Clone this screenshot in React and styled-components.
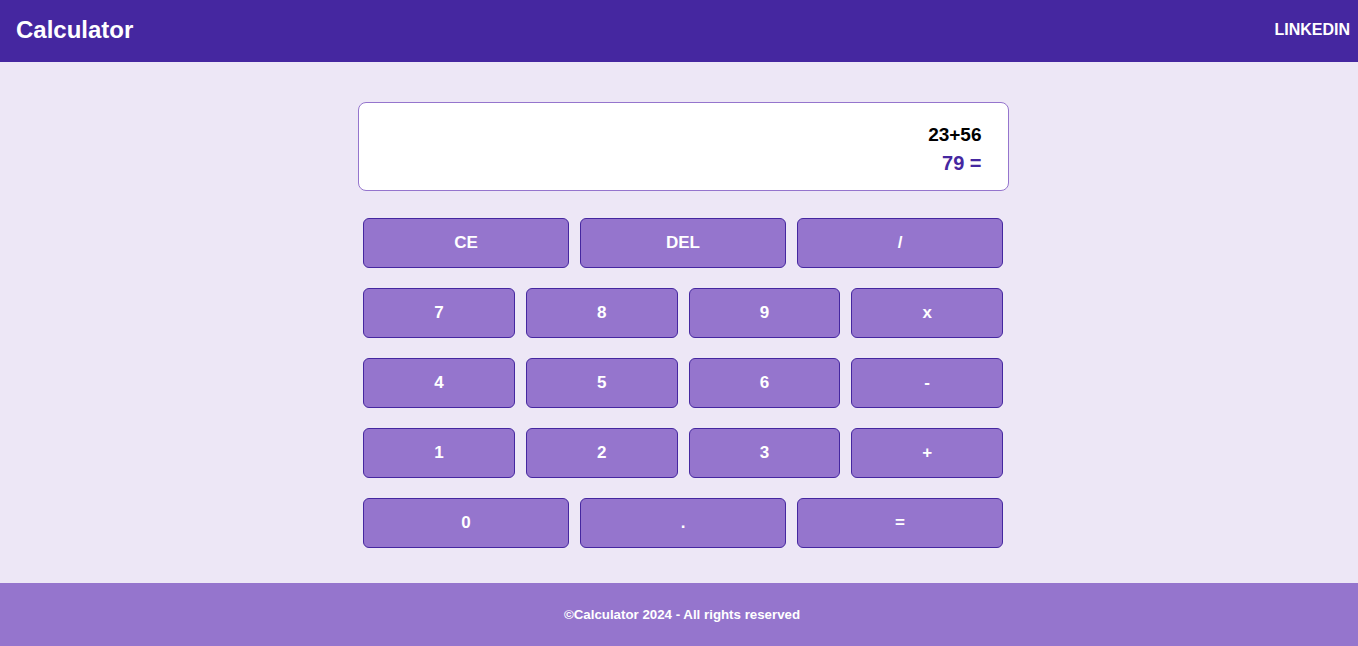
import React from "react";
import styled, { createGlobalStyle } from "styled-components";

const Global = createGlobalStyle`
  html, body { margin: 0; padding: 0; }
  body {
    font-family: "Liberation Sans", Arial, sans-serif;
    background: #ede7f6;
  }
`;

const Page = styled.div`
  min-height: 646px;
  display: flex;
  flex-direction: column;
`;

const Header = styled.header`
  height: 62px;
  background: #4527a0;
  display: flex;
  align-items: center;
  justify-content: space-between;
  padding: 0 8px 2px 16px;
  box-sizing: border-box;
`;

const Brand = styled.h1`
  margin: 0;
  color: #fff;
  font-size: 24px;
  font-weight: 700;
`;

const NavLink = styled.a`
  color: #fff;
  font-size: 16px;
  font-weight: 700;
  text-decoration: none;
`;

const Main = styled.main`
  flex: 1;
  display: flex;
  flex-direction: column;
  align-items: center;
  padding: 40px 0 35px 8px;
`;

const Display = styled.div`
  width: 651px;
  height: 89px;
  box-sizing: border-box;
  background: #fff;
  border: 1px solid #9575cd;
  border-radius: 8px;
  display: flex;
  flex-direction: column;
  align-items: flex-end;
  justify-content: flex-start;
  padding: 21px 26px 0;
  gap: 6px;
`;

const Expr = styled.div`
  font-size: 19px;
  line-height: 22px;
  font-weight: 700;
  color: #000;
`;

const Result = styled.div`
  font-size: 20px;
  line-height: 23px;
  font-weight: 700;
  color: #4527a0;
`;

const Keypad = styled.div`
  width: 640px;
  margin-top: 27px;
  display: flex;
  flex-direction: column;
  gap: 20px;
`;

const Row = styled.div`
  display: grid;
  grid-template-columns: repeat(${(p) => p.$cols}, 1fr);
  gap: 11px;
`;

const Key = styled.button`
  height: 50px;
  background: #9575cd;
  border: 1px solid #4527a0;
  border-radius: 6px;
  color: #fff;
  font-family: "Liberation Sans", Arial, sans-serif;
  font-size: 17px;
  font-weight: 700;
  cursor: pointer;
  padding: 0;
`;

const Footer = styled.footer`
  height: 63px;
  background: #9575cd;
  display: flex;
  align-items: center;
  justify-content: center;
  padding: 0 0 0 6px;
  color: #fff;
  font-size: 13.3px;
  font-weight: 700;
`;

const rows = [
  ["CE", "DEL", "/"],
  ["7", "8", "9", "x"],
  ["4", "5", "6", "-"],
  ["1", "2", "3", "+"],
  ["0", ".", "="],
];

export default function App() {
  return (
    <Page>
      <Global />
      <Header>
        <Brand>Calculator</Brand>
        <NavLink href="#">LINKEDIN</NavLink>
      </Header>
      <Main>
        <Display>
          <Expr>23+56</Expr>
          <Result>79 =</Result>
        </Display>
        <Keypad>
          {rows.map((r, i) => (
            <Row key={i} $cols={r.length}>
              {r.map((k) => (
                <Key key={k}>{k}</Key>
              ))}
            </Row>
          ))}
        </Keypad>
      </Main>
      <Footer>©Calculator 2024 - All rights reserved</Footer>
    </Page>
  );
}
